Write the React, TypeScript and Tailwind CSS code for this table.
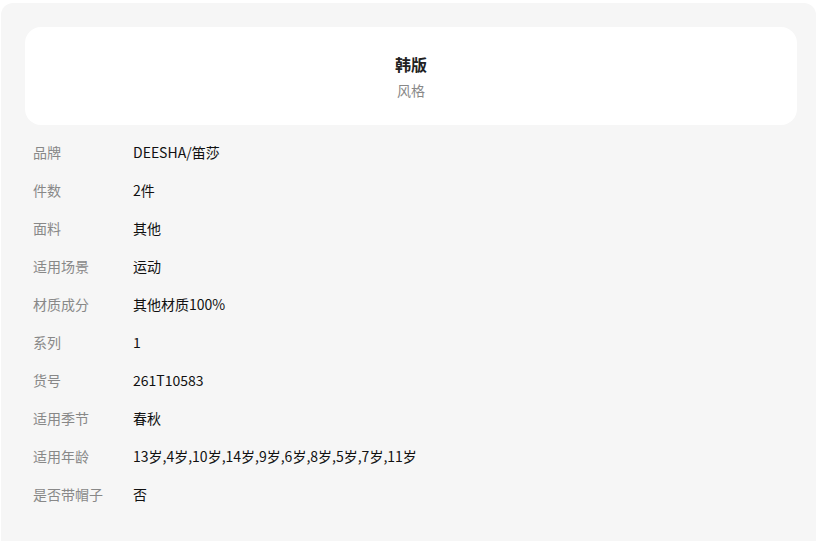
const specs: { label: string; value: string }[] = [
  { label: "品牌", value: "DEESHA/笛莎" },
  { label: "件数", value: "2件" },
  { label: "面料", value: "其他" },
  { label: "适用场景", value: "运动" },
  { label: "材质成分", value: "其他材质100%" },
  { label: "系列", value: "1" },
  { label: "货号", value: "261T10583" },
  { label: "适用季节", value: "春秋" },
  { label: "适用年龄", value: "13岁,4岁,10岁,14岁,9岁,6岁,8岁,5岁,7岁,11岁" },
  { label: "是否带帽子", value: "否" },
];

export default function App() {
  return (
    <div
      className="min-h-[541px] bg-white pt-[3px] pl-[1px]"
      style={{ fontFamily: '"Noto Sans CJK SC", "Noto Sans", sans-serif' }}
    >
      <div className="min-h-[560px] rounded-xl bg-[#f6f6f6] pl-6 pr-[19px] pt-6 pb-8">
        <div className="flex h-[98px] flex-col items-center justify-center rounded-2xl bg-white">
          <div className="text-base font-bold leading-[22px] text-[#222]">韩版</div>
          <div className="mt-[5px] text-sm leading-5 text-[#888]">风格</div>
        </div>

        <div className="mt-2">
          {specs.map((item) => (
            <div key={item.label} className="flex h-[38px] items-center px-2 text-sm">
              <div className="w-[100px] text-[#888]">{item.label}</div>
              <div className="text-[#111]">{item.value}</div>
            </div>
          ))}
        </div>
      </div>
    </div>
  );
}
